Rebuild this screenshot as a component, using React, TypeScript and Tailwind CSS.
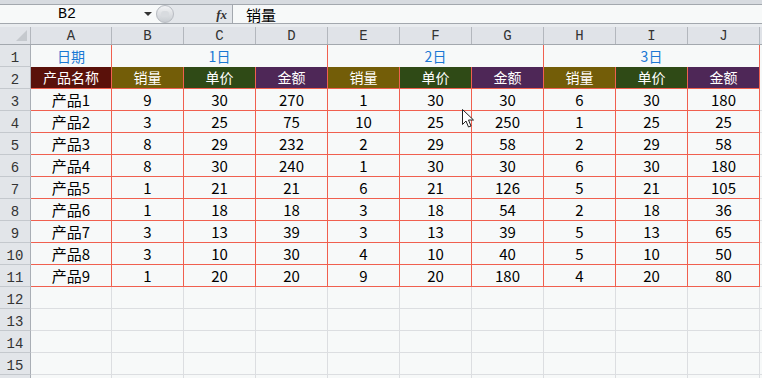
import React from "react";

const colW = ["w-[81px]", "w-[72px]", "w-[72px]", "w-[72px]", "w-[72px]", "w-[72px]", "w-[72px]", "w-[72px]", "w-[72px]", "w-[72px]"];
const letters = ["A", "B", "C", "D", "E", "F", "G", "H", "I", "J"];

const data: (string | number)[][] = [
  ["产品1", 9, 30, 270, 1, 30, 30, 6, 30, 180],
  ["产品2", 3, 25, 75, 10, 25, 250, 1, 25, 25],
  ["产品3", 8, 29, 232, 2, 29, 58, 2, 29, 58],
  ["产品4", 8, 30, 240, 1, 30, 30, 6, 30, 180],
  ["产品5", 1, 21, 21, 6, 21, 126, 5, 21, 105],
  ["产品6", 1, 18, 18, 3, 18, 54, 2, 18, 36],
  ["产品7", 3, 13, 39, 3, 13, 39, 5, 13, 65],
  ["产品8", 3, 10, 30, 4, 10, 40, 5, 10, 50],
  ["产品9", 1, 20, 20, 9, 20, 180, 4, 20, 80],
];

const headers = ["产品名称", "销量", "单价", "金额", "销量", "单价", "金额", "销量", "单价", "金额"];
const headerBg = [
  "bg-[#5a110a]",
  "bg-[#735d08]",
  "bg-[#2f4a16]",
  "bg-[#4e2757]",
  "bg-[#735d08]",
  "bg-[#2f4a16]",
  "bg-[#4e2757]",
  "bg-[#735d08]",
  "bg-[#2f4a16]",
  "bg-[#4e2757]",
];

const mono = { fontFamily: '"Liberation Mono", "DejaVu Sans Mono", monospace' };
const cjk = { fontFamily: '"Noto Sans CJK SC", "Noto Sans", sans-serif' };

function RowHead({ n }: { n?: number }) {
  return (
    <div
      className="w-[31px] h-[22px] shrink-0 bg-[#e2e5e9] border-r border-b border-r-[#a9aeb5] border-b-[#c4c8cd] flex items-end justify-center pb-[1px] text-[14px] text-[#333] leading-none"
      style={mono}
    >
      {n}
    </div>
  );
}

function Cursor() {
  return (
    <svg className="absolute left-[462px] top-[109px]" width="13" height="20" viewBox="0 0 13 20">
      <path d="M0.5 0.5 L0.5 15.5 L4 12 L6.5 18 L9 17 L6.5 11 L11.5 11 Z" fill="#fff" stroke="#222" strokeWidth="1" />
    </svg>
  );
}

export default function App() {
  return (
    <div className="relative w-[762px] h-[378px] overflow-hidden bg-[#f7f9f9]" style={cjk}>
      {/* formula bar */}
      <div className="h-[4px] bg-[#d7dbe0]" />
      <div className="h-[20px] flex border-t border-b border-[#a3a8ae] bg-[#f7f9f9]">
        <div className="w-[156px] relative flex items-center">
          <span className="absolute left-[58px] text-[15px] text-black leading-none" style={mono}>B2</span>
          <span className="absolute left-[144px] top-[7px] w-0 h-0 border-l-[4px] border-r-[4px] border-t-[4px] border-l-transparent border-r-transparent border-t-[#333]" />
        </div>
        <div className="w-[77px] flex items-center bg-[#e3e6ea] rounded-l-[10px] border-r border-[#a3a8ae]">
          <div className="w-[18px] h-[18px] rounded-full bg-gradient-to-b from-[#f2f3f5] to-[#c9cdd2] border border-[#b8bcc2] flex items-center justify-center">
            <div className="w-[8px] h-[6px] rounded-[3px] bg-[#d8dbdf]" />
          </div>
          <span
            className="ml-auto mr-[5px] text-[13px] italic font-bold text-[#333] leading-none"
            style={{ fontFamily: '"Liberation Serif", serif' }}
          >
            fx
          </span>
        </div>
        <div className="flex-1 flex items-center pl-[13px] text-[15px] text-black leading-none">销量</div>
      </div>
      <div className="h-[3px] bg-[#e9ecef]" />

      {/* column headers */}
      <div className="flex h-[18px] bg-[#e0e3e8] border-b border-[#a3a8ae]">
        <div className="w-[31px] shrink-0 border-r border-[#b3b7bd] relative">
          <svg className="absolute right-[3px] bottom-[3px]" width="11" height="11" viewBox="0 0 11 11">
            <path d="M11 0 L11 11 L0 11 Z" fill="#c5c9ce" />
          </svg>
        </div>
        {letters.map((l, i) => (
          <div
            key={l}
            className={`${colW[i]} shrink-0 border-r border-[#b3b7bd] flex items-center justify-center text-[14px] text-[#333] leading-none`}
            style={mono}
          >
            {l}
          </div>
        ))}
        <div className="flex-1" />
      </div>

      {/* row 1 */}
      <div className="flex h-[22px]">
        <RowHead n={1} />
        <div className="w-[81px] shrink-0 border-r border-[#f0604f] flex items-center justify-center text-[14px] text-[#1a78d4]">日期</div>
        <div className="w-[216px] shrink-0 border-r border-[#f0604f] flex items-center justify-center text-[14px] text-[#1a78d4]">1日</div>
        <div className="w-[216px] shrink-0 border-r border-[#f0604f] flex items-center justify-center text-[14px] text-[#1a78d4]">2日</div>
        <div className="w-[216px] shrink-0 border-r border-[#f0604f] flex items-center justify-center text-[14px] text-[#1a78d4]">3日</div>
        <div className="flex-1" />
      </div>

      {/* row 2 */}
      <div className="flex h-[22px]">
        <RowHead n={2} />
        {headers.map((h, i) => (
          <div
            key={i}
            className={`${colW[i]} ${headerBg[i]} shrink-0 border-r border-b border-[#f0604f] flex items-center justify-center text-[14px] text-white`}
          >
            {h}
          </div>
        ))}
        <div className="flex-1" />
      </div>

      {/* data rows */}
      {data.map((row, r) => (
        <div key={r} className="flex h-[22px]">
          <RowHead n={r + 3} />
          {row.map((v, i) => (
            <div
              key={i}
              className={`${colW[i]} shrink-0 border-r border-b border-[#f0604f] flex items-center justify-center text-[15px] text-black leading-none`}
            >
              {v}
            </div>
          ))}
          <div className="flex-1 border-b border-[#dcdee1]" />
        </div>
      ))}

      {/* empty rows */}
      {[12, 13, 14, 15, 0].map((n) => (
        <div key={n} className="flex h-[22px]">
          <RowHead n={n || undefined} />
          {letters.map((l, i) => (
            <div key={l} className={`${colW[i]} shrink-0 border-r border-b border-[#dcdee1]`} />
          ))}
          <div className="flex-1 border-b border-[#dcdee1]" />
        </div>
      ))}

      <Cursor />
    </div>
  );
}
